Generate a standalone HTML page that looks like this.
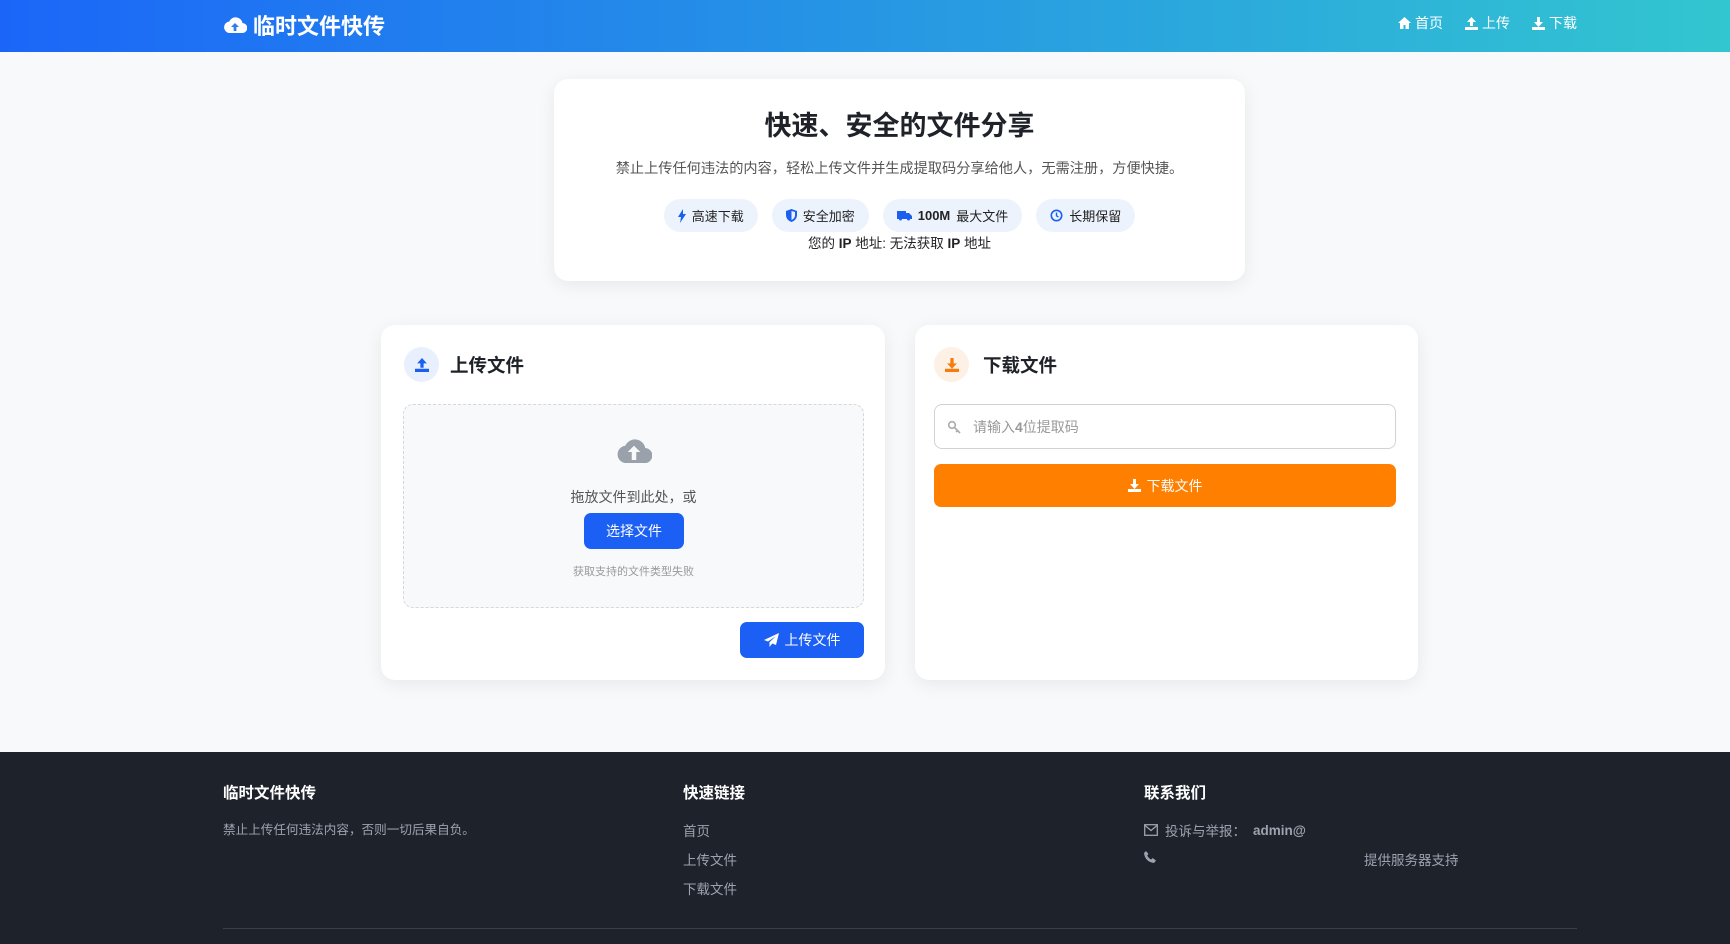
<!DOCTYPE html>
<html><head><meta charset="utf-8"><style>
*{margin:0;padding:0;box-sizing:border-box}
body{width:1730px;height:944px;overflow:hidden;background:#f7f9fb;font-family:"Liberation Sans","Noto Sans CJK SC",sans-serif;color:#1f2329;position:relative}
.hd{position:absolute;left:0;top:0;width:1730px;height:52px;background:linear-gradient(90deg,#1b66f8,#32c6d0)}
.logo{position:absolute;left:223px;top:9px;color:#fff;font-size:22px;font-weight:bold;display:flex;align-items:center;gap:6px}
.nav{position:absolute;right:153px;top:13px;color:#fff;font-size:14px;display:flex;gap:22px}
.nav span{display:flex;align-items:center;gap:4px}
.card{position:absolute;background:#fff;border-radius:14px;box-shadow:0 4px 18px rgba(0,0,0,.07)}
.hero{left:554px;top:79px;width:691px;height:202px;text-align:center}
.badges{position:absolute;left:0;width:100%;display:flex;justify-content:center;gap:14px}
.badge{height:33px;padding:0 14px;border-radius:17px;background:#edf3fd;font-size:13px;display:flex;align-items:center;gap:6px;color:#222}
.abs{position:absolute}
.ct{position:absolute;left:0;width:100%;text-align:center}
.btn{position:absolute;border-radius:7px;color:#fff;font-size:14px;display:flex;align-items:center;justify-content:center;gap:6px}
.ft{position:absolute;left:0;top:752px;width:1730px;height:192px;background:#1e222b;color:#9ca3af;font-size:12.6px}
.ft h3{position:absolute;top:29px;color:#fff;font-size:15.5px}
.ft .l{position:absolute}
</style></head><body>
<div class="hd">
 <div class="logo"><svg width="24" height="20" viewBox="0 0 24 20"><path d="M6 18h13a5 5 0 0 0 .5-10A7 7 0 0 0 6.2 6.5 5.8 5.8 0 0 0 6 18z" fill="#fff"/><path d="M12 8l-4 4h2.6v4h2.8v-4H16z" fill="#2a7ff0"/></svg>临时文件快传</div>
 <div class="nav"><span><svg width="13" height="12" viewBox="0 0 13 12"><path d="M6.5 0L0 6h2v6h3.5V8h2v4H11V6h2z" fill="#fff"/></svg>首页</span><span><svg width="13" height="13" viewBox="0 0 13 13"><path d="M6.5 0L2 5h3v4h3V5h3zM0 10h13v3H0z" fill="#fff"/></svg>上传</span><span><svg width="13" height="13" viewBox="0 0 13 13"><path d="M5 0h3v5h3L6.5 10 2 5h3zM0 10h13v3H0z" fill="#fff"/></svg>下载</span></div>
</div>

<div class="card hero">
 <div class="ct" style="top:25px;font-size:27px;font-weight:bold;color:#1f2329">快速、安全的文件分享</div>
 <div class="ct" style="top:79px;font-size:14.2px;color:#555">禁止上传任何违法的内容，轻松上传文件并生成提取码分享给他人，无需注册，方便快捷。</div>
 <div class="badges" style="top:120px">
  <div class="badge"><svg width="8" height="14" viewBox="0 0 8 14"><path d="M5 0L0 8h3l-1 6 6-9H5z" fill="#1b5ff0"/></svg>高速下载</div>
  <div class="badge"><svg width="11" height="13" viewBox="0 0 11 13"><path d="M5.5 0L0 2v4c0 3.5 2.5 6 5.5 7 3-1 5.5-3.5 5.5-7V2z" fill="#1b5ff0"/><path d="M5.5 2v9c2-1 3.5-2.5 3.5-5V3z" fill="#edf3fd"/></svg>安全加密</div>
  <div class="badge"><svg width="15" height="12" viewBox="0 0 15 12"><path d="M0 1h9v8H0zM9 3h3l3 3v3H9zM2 9a1.5 1.5 0 1 0 3 0M10 9a1.5 1.5 0 1 0 3 0" fill="#1b5ff0"/></svg><b style="font-weight:bold">100M</b>最大文件</div>
  <div class="badge"><svg width="13" height="13" viewBox="0 0 13 13"><circle cx="6.5" cy="6.5" r="5.2" fill="none" stroke="#1b5ff0" stroke-width="1.6"/><path d="M6.5 3.5v3.3l2 1.3" stroke="#1b5ff0" stroke-width="1.4" fill="none"/></svg>长期保留</div>
 </div>
 <div class="ct" style="top:153px;font-size:13.5px;color:#222">您的 <b>IP</b> 地址: 无法获取 <b>IP</b> 地址</div>
</div>

<div class="card" style="left:381px;top:325px;width:504px;height:355px">
 <div class="abs" style="left:23px;top:22px;width:35px;height:35px;border-radius:50%;background:#e8f0fd;display:flex;align-items:center;justify-content:center"><svg width="14" height="14" viewBox="0 0 13 13"><path d="M6.5 0L2 5h3v4h3V5h3zM0 10h13v3H0z" fill="#1b5ff0"/></svg></div>
 <div class="abs" style="left:69px;top:27px;font-size:18.5px;font-weight:bold">上传文件</div>
 <div class="abs" style="left:22px;top:79px;width:461px;height:204px;border:1.5px dashed #d4d8de;border-radius:10px;background:#f8f9fb">
  <svg class="abs" style="left:212px;top:31px" width="36" height="30" viewBox="0 0 24 20"><path d="M6 18h13a5 5 0 0 0 .5-10A7 7 0 0 0 6.2 6.5 5.8 5.8 0 0 0 6 18z" fill="#9aa1ab"/><path d="M12 6.5l-4.2 4.2h2.7V16h3v-5.3h2.7z" fill="#f8f9fb"/></svg>
  <div class="ct" style="top:82px;font-size:14px;color:#555">拖放文件到此处，或</div>
  <div class="btn" style="left:180px;top:108px;width:100px;height:36px;background:#1b5ff5">选择文件</div>
  <div class="ct" style="top:158px;font-size:11px;color:#999">获取支持的文件类型失败</div>
 </div>
 <div class="btn" style="left:359px;top:297px;width:124px;height:36px;background:#1b5ff5"><svg width="15" height="14" viewBox="0 0 15 14"><path d="M15 0L0 7l4 1.5L12 3 5.5 9.3V14l2.8-3.5L12 12z" fill="#fff"/></svg>上传文件</div>
</div>

<div class="card" style="left:915px;top:325px;width:503px;height:355px">
 <div class="abs" style="left:19px;top:22px;width:35px;height:35px;border-radius:50%;background:#fdf0e5;display:flex;align-items:center;justify-content:center"><svg width="14" height="14" viewBox="0 0 13 13"><path d="M5 0h3v5h3L6.5 10 2 5h3zM0 10h13v3H0z" fill="#f57c0f"/></svg></div>
 <div class="abs" style="left:68px;top:27px;font-size:18.5px;font-weight:bold">下载文件</div>
 <div class="abs" style="left:19px;top:79px;width:462px;height:45px;border:1px solid #cfd3d8;border-radius:8px;display:flex;align-items:center;padding-left:12px;gap:12px;font-size:14px;color:#999"><svg width="14" height="14" viewBox="0 0 14 14"><circle cx="5" cy="5" r="3.3" fill="none" stroke="#aaa" stroke-width="1.6"/><path d="M7.3 7.3L13 13M10.5 10.5l-1.5 1.5" stroke="#aaa" stroke-width="1.6"/></svg><span>请输入<b>4</b>位提取码</span></div>
 <div class="btn" style="left:19px;top:139px;width:462px;height:43px;background:#ff7f00"><svg width="13" height="13" viewBox="0 0 13 13"><path d="M5 0h3v5h3L6.5 10 2 5h3zM0 10h13v3H0z" fill="#fff"/></svg>下载文件</div>
</div>

<div class="ft">
 <h3 style="left:223px">临时文件快传</h3>
 <div class="l" style="left:223px;top:67px">禁止上传任何违法内容，否则一切后果自负。</div>
 <h3 style="left:683px">快速链接</h3>
 <div class="l" style="left:683px;top:68px;font-size:13.5px">首页</div>
 <div class="l" style="left:683px;top:97px;font-size:13.5px">上传文件</div>
 <div class="l" style="left:683px;top:126px;font-size:13.5px">下载文件</div>
 <h3 style="left:1144px">联系我们</h3>
 <div class="l" style="left:1144px;top:68px;display:flex;align-items:center;gap:7px;font-size:13.5px"><svg width="14" height="12" viewBox="0 0 14 12"><rect x="0.7" y="0.7" width="12.6" height="10.6" fill="none" stroke="#9ca3af" stroke-width="1.3"/><path d="M1 1.5l6 5 6-5" fill="none" stroke="#9ca3af" stroke-width="1.3"/></svg>投诉与举报：<b>admin@</b></div>
 <div class="l" style="left:1144px;top:99px"><svg width="12" height="12" viewBox="0 0 12 12"><path d="M2 0l2.5 3-1.3 1.5c.8 1.8 2.3 3.3 4 4L8.7 7 12 9.5 10 12C4.5 11.5.5 7.5 0 2z" fill="#9ca3af"/></svg></div>
 <div class="l" style="left:1364px;top:97px;font-size:13.5px">提供服务器支持</div>
 <div class="l" style="left:223px;top:176px;width:1354px;height:1px;background:#3a404b"></div>
</div>
</body></html>
